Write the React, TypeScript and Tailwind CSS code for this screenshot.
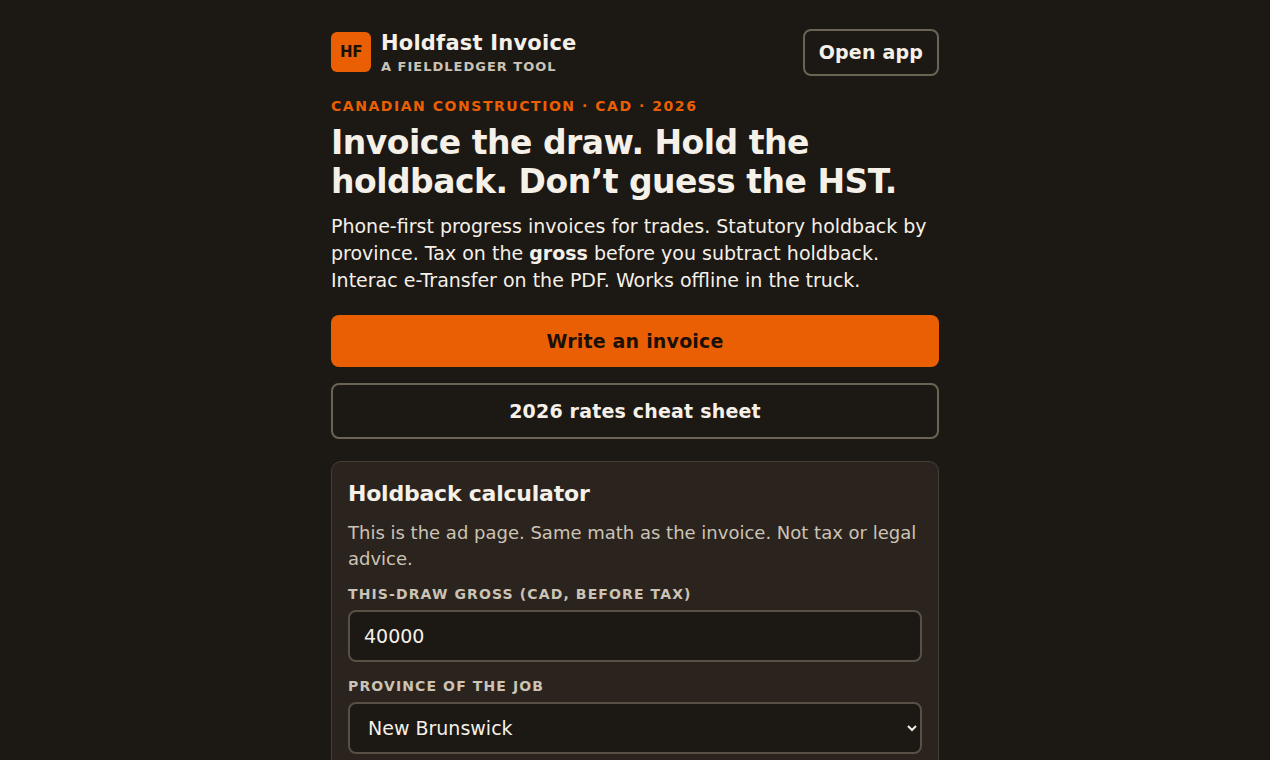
import { useState } from "react";

const provinces = [
  "Alberta",
  "British Columbia",
  "Manitoba",
  "New Brunswick",
  "Newfoundland and Labrador",
  "Nova Scotia",
  "Ontario",
  "Prince Edward Island",
  "Quebec",
  "Saskatchewan",
];

function Header() {
  return (
    <header className="flex items-center justify-between gap-3">
      <div className="flex items-center gap-2.5">
        <div className="flex size-10 items-center justify-center rounded-md bg-[#ea5f04] text-[15px] font-bold tracking-[-0.02em] text-[#1a1008]">
          HF
        </div>
        <div>
          <p className="text-[21px] leading-[30px] font-bold tracking-[0.01em]">
            Holdfast Invoice
          </p>
          <p className="text-[13px] leading-[18px] font-bold tracking-[1px] text-[#cbc3b5] uppercase">
            A FieldLedger tool
          </p>
        </div>
      </div>
      <a
        href="#app"
        className="rounded-lg border-2 border-[#6b6354] px-3.5 py-2 text-[19px] leading-[27px] font-bold tracking-[0.01em]"
      >
        Open app
      </a>
    </header>
  );
}

function Calculator() {
  const [gross, setGross] = useState("40000");
  const [province, setProvince] = useState("New Brunswick");
  const label =
    "block text-[14px] leading-5 font-bold tracking-[0.08em] text-[#cbc3b5] uppercase";
  const field =
    "mt-1.5 block h-13 w-full rounded-lg border-2 border-[#575045] bg-[#1c1814] px-3.5 text-[19px] text-[#f5f0e8]";
  return (
    <section className="mt-[22px] rounded-[10px] border border-[#453e35] bg-[#2b241e] p-4">
      <h2 className="text-[22px] leading-8 font-bold tracking-[-0.01em]">
        Holdback calculator
      </h2>
      <p className="mt-2.5 text-[18px] leading-[26px] text-[#cbc3b5]">
        This is the ad page. Same math as the invoice. Not tax or legal advice.
      </p>
      <div className="mt-3">
        <label htmlFor="gross" className={label}>
          This-draw gross (CAD, before tax)
        </label>
        <input
          id="gross"
          inputMode="decimal"
          className={field}
          value={gross}
          onChange={(e) => setGross(e.target.value)}
        />
      </div>
      <div className="mt-3.5">
        <label htmlFor="province" className={label}>
          Province of the job
        </label>
        <select
          id="province"
          className={field}
          value={province}
          onChange={(e) => setProvince(e.target.value)}
        >
          {provinces.map((p) => (
            <option key={p}>{p}</option>
          ))}
        </select>
      </div>
    </section>
  );
}

export default function App() {
  return (
    <div className="h-screen overflow-hidden bg-[#1c1814] font-['DejaVu_Sans',sans-serif] text-[#f5f0e8]">
      <main className="mx-auto max-w-[640px] px-4 pt-7">
        <Header />
        <p className="mt-5 text-[14px] leading-5 font-bold tracking-[0.11em] text-[#ea5f04] uppercase">
          Canadian construction · CAD · 2026
        </p>
        <h1 className="mt-[7px] text-[33px] leading-[39px] font-bold tracking-[-0.015em]">
          Invoice the draw. Hold the holdback. Don’t guess the HST.
        </h1>
        <p className="mt-3 text-[19px] leading-[27px]">
          Phone-first progress invoices for trades. Statutory holdback by
          province. Tax on the <strong>gross</strong> before you subtract
          holdback. Interac e-Transfer on the PDF. Works offline in the truck.
        </p>
        <div className="mt-[21px] grid gap-4 text-center text-[19px] leading-7 font-bold tracking-[0.01em]">
          <a
            href="#invoice"
            className="rounded-lg bg-[#ea5f04] py-3 text-[#1a1008]"
          >
            Write an invoice
          </a>
          <a
            href="#rates"
            className="rounded-lg border-2 border-[#6b6354] py-3"
          >
            2026 rates cheat sheet
          </a>
        </div>
        <Calculator />
      </main>
    </div>
  );
}
